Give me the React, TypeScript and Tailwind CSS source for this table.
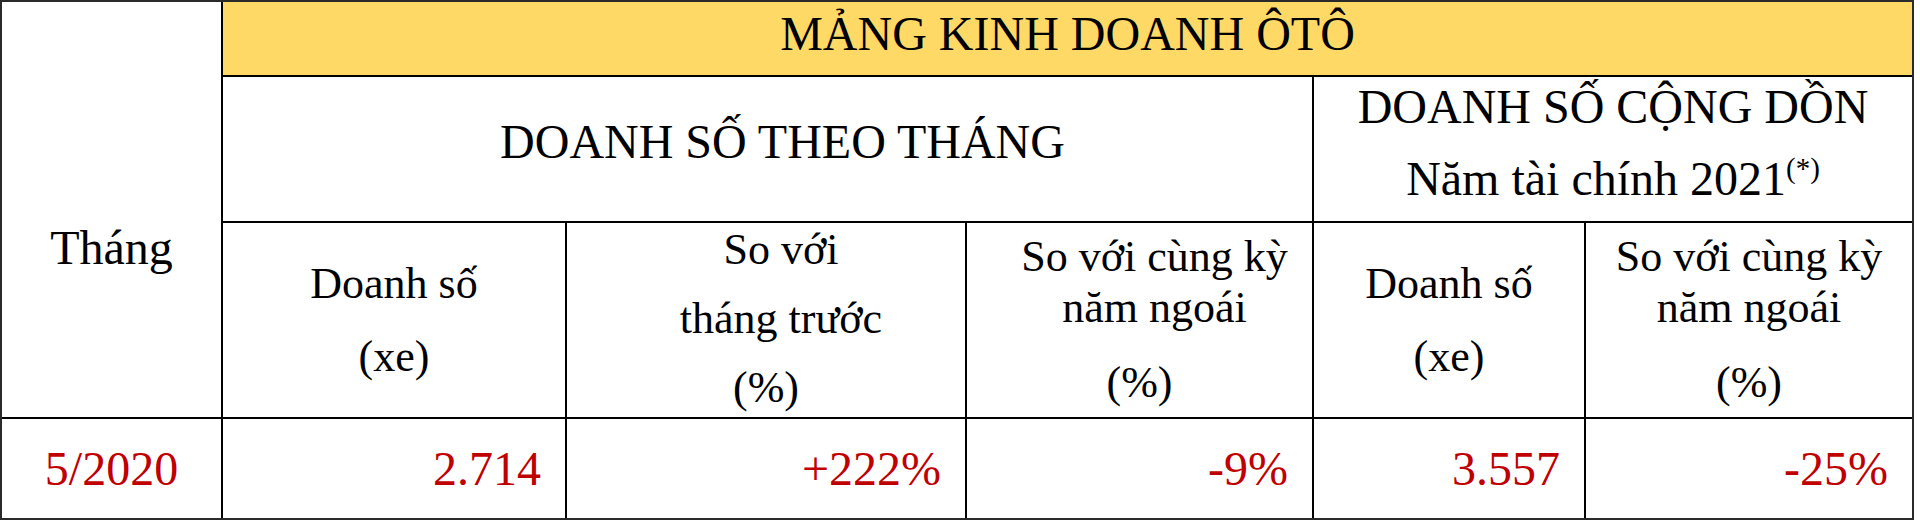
const red = "text-[#c00000]";

function Cell({
  className = "",
  children,
}: {
  className?: string;
  children?: React.ReactNode;
}) {
  return (
    <div className={`flex flex-col items-center justify-center text-center ${className}`}>
      {children}
    </div>
  );
}

export default function App() {
  const dataRow = [
    { value: "2.714", border: true },
    { value: "+222%", border: true },
    { value: "-9%", border: true },
    { value: "3.557", border: true },
    { value: "-25%", border: false },
  ];

  return (
    <div className="w-[1920px] h-[524px] bg-white font-['Liberation_Serif','Times_New_Roman',serif] text-black">
      <div className="w-[1914px] h-[520px] border-2 border-[#2a2a2a] grid grid-cols-[221px_344px_400px_347px_272px_326px] grid-rows-[75px_146px_196px_99px]">
        {/* Tháng */}
        <Cell className="row-span-3 border-r-2 border-b-2 border-black pt-[76px] text-[48px] leading-[57.6px]">
          Tháng
        </Cell>

        {/* Title */}
        <Cell className="col-span-5 border-b-2 border-black bg-[#ffd966] pb-[9px] text-[48px] leading-[57.6px]">
          MẢNG KINH DOANH ÔTÔ
        </Cell>

        {/* Group headers */}
        <Cell className="col-span-3 border-r-2 border-b-2 border-black pb-[14px] pl-[30px] text-[48px] leading-[57.6px]">
          DOANH SỐ THEO THÁNG
        </Cell>
        <Cell className="col-span-2 border-b-2 border-black pb-3 text-[48px] leading-[72px]">
          <span className="whitespace-nowrap">DOANH SỐ CỘNG DỒN</span>
          <span className="whitespace-nowrap">
            Năm tài chính 2021
            <span className="relative top-[-17px] text-[29px] leading-none">(*)</span>
          </span>
        </Cell>

        {/* Column headers */}
        <Cell className="border-r-2 border-b-2 border-black text-[44px] leading-[73px]">
          <span>Doanh số</span>
          <span>(xe)</span>
        </Cell>
        <Cell className="border-r-2 border-b-2 border-black pb-1 text-[44px] leading-[69px]">
          <span className="pl-[30px]">So với</span>
          <span className="pl-[30px]">tháng trước</span>
          <span>(%)</span>
        </Cell>
        <Cell className="border-r-2 border-b-2 border-black pb-[2px] text-[44px] leading-[51px]">
          <span className="pl-[30px] whitespace-nowrap">So với cùng kỳ</span>
          <span className="pl-[30px]">năm ngoái</span>
          <span className="mt-6">(%)</span>
        </Cell>
        <Cell className="border-r-2 border-b-2 border-black text-[44px] leading-[73px]">
          <span>Doanh số</span>
          <span>(xe)</span>
        </Cell>
        <Cell className="border-b-2 border-black pb-[2px] text-[44px] leading-[51px]">
          <span className="whitespace-nowrap">So với cùng kỳ</span>
          <span>năm ngoái</span>
          <span className="mt-6">(%)</span>
        </Cell>

        {/* Data */}
        <Cell className={`border-r-2 border-black text-[48px] leading-[57.6px] ${red}`}>
          5/2020
        </Cell>
        {dataRow.map((d) => (
          <div
            key={d.value}
            className={`flex items-center justify-end pr-6 text-[48px] leading-[57.6px] ${red} ${
              d.border ? "border-r-2 border-black" : ""
            }`}
          >
            {d.value}
          </div>
        ))}
      </div>
    </div>
  );
}
